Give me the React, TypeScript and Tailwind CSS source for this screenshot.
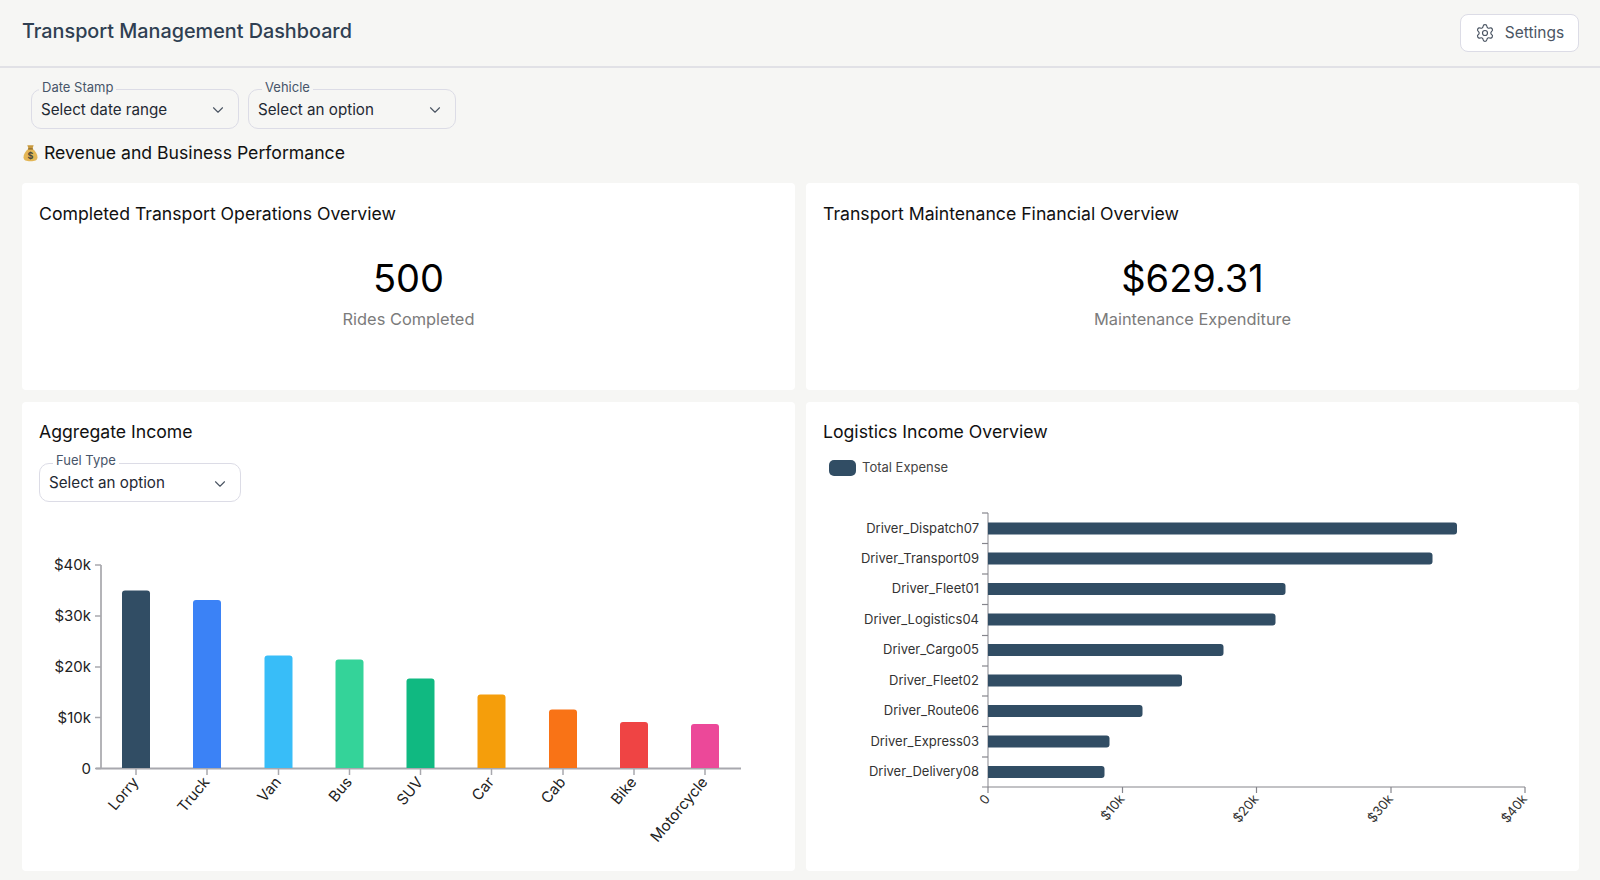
import { ChevronDown, Settings } from "lucide-react";

type Bar = { name: string, left: number, top: number, color: string }
type Row = { name: string, y: number, end: number }

const bars: Bar[] = [
  { name: "Lorry", left: 122, top: 590.5, color: "#314d64" },
  { name: "Truck", left: 193, top: 600, color: "#3b82f6" },
  { name: "Van", left: 264.5, top: 655.5, color: "#38bdf8" },
  { name: "Bus", left: 335.5, top: 659.5, color: "#34d399" },
  { name: "SUV", left: 406.5, top: 678.5, color: "#10b981" },
  { name: "Car", left: 477.5, top: 694.5, color: "#f59e0b" },
  { name: "Cab", left: 549, top: 709.5, color: "#f97316" },
  { name: "Bike", left: 620, top: 722, color: "#ef4444" },
  { name: "Motorcycle", left: 691, top: 724, color: "#ec4899" },
]

const rows: Row[] = [
  { name: "Driver_Dispatch07", y: 528.5, end: 1457 },
  { name: "Driver_Transport09", y: 558.5, end: 1432.5 },
  { name: "Driver_Fleet01", y: 589, end: 1285.5 },
  { name: "Driver_Logistics04", y: 619.5, end: 1275.5 },
  { name: "Driver_Cargo05", y: 650, end: 1223.5 },
  { name: "Driver_Fleet02", y: 680.5, end: 1182 },
  { name: "Driver_Route06", y: 711, end: 1142.5 },
  { name: "Driver_Express03", y: 741.5, end: 1109.5 },
  { name: "Driver_Delivery08", y: 772, end: 1104.5 },
]

const yTicks = [
  { label: "$40k", y: 565 },
  { label: "$30k", y: 616 },
  { label: "$20k", y: 667 },
  { label: "$10k", y: 717.5 },
  { label: "0", y: 768.5 },
]

const xTicks = [
  { label: "0", x: 988 },
  { label: "$10k", x: 1122.5 },
  { label: "$20k", x: 1256.5 },
  { label: "$30k", x: 1391 },
  { label: "$40k", x: 1525 },
]

const rowTicks = [513, 543.5, 574, 604.5, 635.5, 666, 696, 726.5, 757]

function FloatSelect({ label, value, size, labelLeft, labelTop, bg }: { label: string, value: string, size: string, labelLeft: string, labelTop: string, bg: string }) {
  return (
    <div className={`relative flex items-center justify-between rounded-[10px] border-[1.5px] border-[#dcdce6] pl-[9px] pr-[11px] pt-[2px] ${size}`}>
      <span className={`absolute px-[3px] text-[13px] leading-[18px] text-[#475569] ${labelTop} ${labelLeft} ${bg}`}>{label}</span>
      <span className="text-[15.2px] text-[#1f2933]">{value}</span>
      <ChevronDown size={18} strokeWidth={1.5} className="text-[#4b5563]" />
    </div>
  )
}

function MoneyBag() {
  return (
    <svg width="15" height="18" viewBox="0 0 14 17">
      <path d="M4 1.2 L10 1.2 L8.8 4.4 L5.2 4.4 Z" fill="#c99a3d" />
      <path d="M5 4.6 L9 4.6 C12 7 13.6 10 13.6 12.6 C13.6 15.6 11 16.4 7 16.4 C3 16.4 .4 15.6 .4 12.6 C.4 10 2 7 5 4.6 Z" fill="#e3b655" />
      <rect x="4.6" y="4" width="4.8" height="1.3" rx=".6" fill="#8a6420" />
      <text x="7" y="14" textAnchor="middle" fontSize="8.5" fontWeight="700" fill="#4a4a3a" fontFamily="Inter, sans-serif">$</text>
    </svg>
  )
}

function Stat({ title, value, caption }: { title: string, value: string, caption: string }) {
  return (
    <div className="h-[207px] rounded-[4px] bg-white pt-[19px]">
      <h3 className="px-[17px] text-[17.65px] leading-[24px] text-[#111]">{title}</h3>
      <div className="mt-[25px] text-center text-[38px] leading-[54px] text-black">{value}</div>
      <div className="mt-[2px] text-center text-[16.4px] leading-[24px] text-[#7b7b7b]">{caption}</div>
    </div>
  )
}

export default function App() {
  return (
    <div className="h-[880px] overflow-hidden bg-[#f6f6f4] font-['Inter',sans-serif]">
      {/* Header */}
      <header className="flex h-[68px] items-center justify-between border-b-2 border-[#e1e1e6] pl-[22px] pr-[21px]">
        <h1 className="mb-[2px] text-[19.8px] font-medium text-[#2f3f52]">Transport Management Dashboard</h1>
        <button className="mb-[1px] flex h-[38px] w-[119px] items-center justify-center gap-[10px] rounded-[8px] border-[1.5px] border-[#dcdce6] bg-white text-[15.5px] text-[#4b5563]">
          <Settings size={20} strokeWidth={1.4} />
          Settings
        </button>
      </header>

      <div className="pl-[22px] pr-[21px]">
        {/* Filters */}
        <div className="flex gap-[9px] pl-[9px] pt-[21px]">
          <FloatSelect label="Date Stamp" value="Select date range" size="h-[40px] w-[208px]" labelLeft="left-[7px]" labelTop="top-[-12px]" bg="bg-[#f6f6f4]" />
          <FloatSelect label="Vehicle" value="Select an option" size="h-[40px] w-[208px]" labelLeft="left-[13px]" labelTop="top-[-12px]" bg="bg-[#f6f6f4]" />
        </div>

        <div className="mt-[12px] flex h-[24px] items-center gap-[6px] pl-[1px]">
          <MoneyBag />
          <h2 className="text-[17.65px] text-[#111]">Revenue and Business Performance</h2>
        </div>

        {/* Stats */}
        <div className="mt-[18px] grid grid-cols-2 gap-[11px]">
          <Stat title="Completed Transport Operations Overview" value="500" caption="Rides Completed" />
          <Stat title="Transport Maintenance Financial Overview" value="$629.31" caption="Maintenance Expenditure" />
        </div>

        {/* Charts */}
        <div className="mt-[12px] grid h-[469px] grid-cols-2 gap-[11px]">
          <div className="rounded-[4px] bg-white pt-[18px]">
            <h3 className="px-[17px] text-[17.65px] leading-[24px] text-[#111]">Aggregate Income</h3>
            <div className="mt-[19px] pl-[17px]">
              <FloatSelect label="Fuel Type" value="Select an option" size="h-[39px] w-[202px]" labelLeft="left-[13px]" labelTop="top-[-13px]" bg="bg-white" />
            </div>
            <svg viewBox="22 502 773 367" className="block w-full font-['Inter',sans-serif]">
              <line x1="101" y1="565" x2="101" y2="769" stroke="#b4b4b8" strokeWidth="2" />
              <line x1="96" y1="768.5" x2="741" y2="768.5" stroke="#a8a8ae" strokeWidth="2" />
              {yTicks.map((t) => (
                <g key={t.label}>
                  <line x1="95" y1={t.y} x2="101" y2={t.y} stroke="#a8a8ae" strokeWidth="1.5" />
                  <text x="91" y={t.y + 5} textAnchor="end" fontSize="15" fill="#222">{t.label}</text>
                </g>
              ))}
              {bars.map((b) => (
                <g key={b.name}>
                  <path
                    d={`M${b.left} 768 V${b.top + 3} Q${b.left} ${b.top} ${b.left + 3} ${b.top} H${b.left + 25} Q${b.left + 28} ${b.top} ${b.left + 28} ${b.top + 3} V768 Z`}
                    fill={b.color}
                  />
                  <line x1={b.left + 14} y1="769" x2={b.left + 14} y2="775" stroke="#a8a8ae" strokeWidth="1.5" />
                  <text
                    x={b.left + 12}
                    y="785"
                    textAnchor="end"
                    fontSize="15"
                    fill="#222"
                    transform={`rotate(-50 ${b.left + 12} 778)`}
                  >
                    {b.name}
                  </text>
                </g>
              ))}
            </svg>
          </div>

          <div className="rounded-[4px] bg-white pt-[18px]">
            <h3 className="px-[17px] text-[17.65px] leading-[24px] text-[#111]">Logistics Income Overview</h3>
            <div className="mt-[14px] flex h-[20px] items-center gap-[6px] pl-[23px]">
              <span className="h-[16px] w-[27px] rounded-[5px] bg-[#314d64]"></span>
              <span className="text-[13px] text-[#444]">Total Expense</span>
            </div>
            <svg viewBox="806 478 773 391" className="block w-full font-['Inter',sans-serif]">
              <line x1="988" y1="513" x2="988" y2="787" stroke="#9a9aa0" strokeWidth="1.2" />
              <line x1="982" y1="787" x2="1525" y2="787" stroke="#85858c" strokeWidth="1.2" />
              {rowTicks.map((y) => (
                <line key={y} x1="982" y1={y} x2="988" y2={y} stroke="#85858c" strokeWidth="1.2" />
              ))}
              {rows.map((r) => (
                <g key={r.name}>
                  <path
                    d={`M988 ${r.y - 6} H${r.end - 3} Q${r.end} ${r.y - 6} ${r.end} ${r.y - 3} V${r.y + 3} Q${r.end} ${r.y + 6} ${r.end - 3} ${r.y + 6} H988 Z`}
                    fill="#314d64"
                  />
                  <text x="979" y={r.y + 4} textAnchor="end" fontSize="13" fill="#333">{r.name}</text>
                </g>
              ))}
              {xTicks.map((t) => (
                <g key={t.x}>
                  <line x1={t.x} y1="787" x2={t.x} y2="793" stroke="#85858c" strokeWidth="1.2" />
                  <text
                    x={t.x - 1}
                    y="801"
                    textAnchor="end"
                    fontSize="13"
                    fill="#333"
                    transform={`rotate(-50 ${t.x - 1} 796)`}
                  >
                    {t.label}
                  </text>
                </g>
              ))}
            </svg>
          </div>
        </div>
      </div>
    </div>
  );
}
